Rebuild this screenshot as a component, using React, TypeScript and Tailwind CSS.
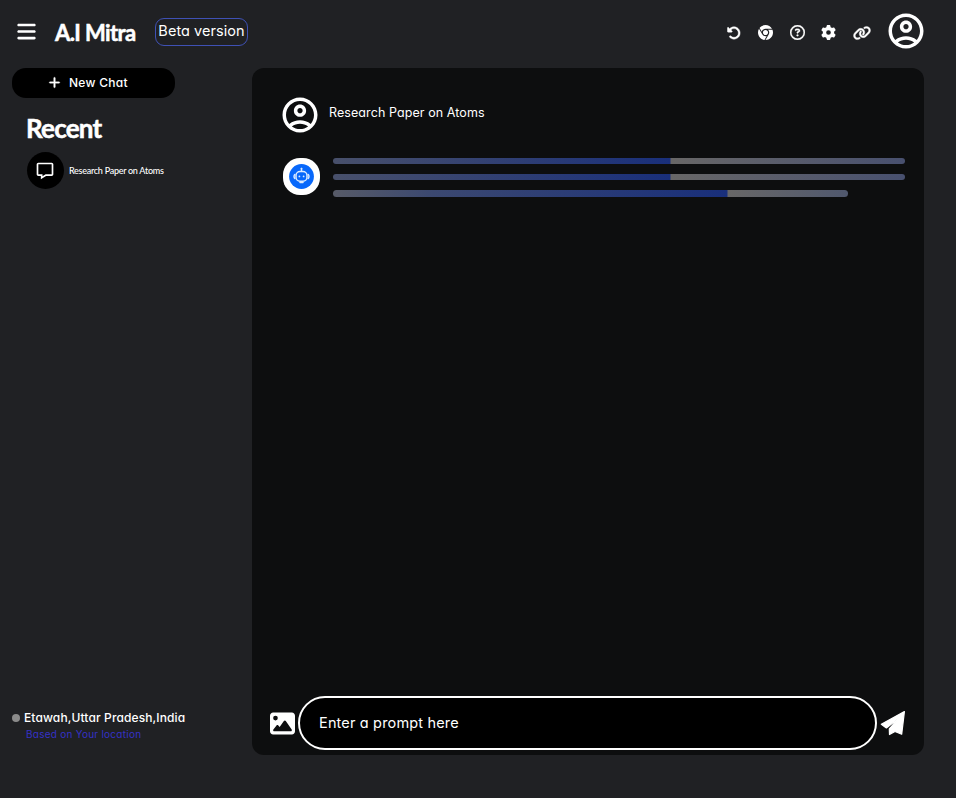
import React from "react";
import { FaBars, FaPlus, FaChrome, FaGear, FaLink, FaRotateLeft, FaRegCircleQuestion, FaImage } from "react-icons/fa6";
import { MdOutlineAccountCircle } from "react-icons/md";
import { BiMessage } from "react-icons/bi";

function BotLogo() {
  return (
    <svg viewBox="0 0 37 37" className="size-[37px]">
      <circle cx="18.5" cy="18.5" r="12.4" fill="#0868fb" />
      <g stroke="#dcebff" strokeWidth="1.5" fill="none">
        <rect x="13" y="13.6" width="11" height="9.6" rx="4" />
        <path d="M18.5 13V10.5M11.8 16.5c-1 .8-1 3.2 0 4M25.2 16.5c1 .8 1 3.2 0 4M17 24.6h3" strokeLinecap="round" />
      </g>
      <circle cx="18.5" cy="10.6" r="0.9" fill="#dcebff" />
      <circle cx="16.4" cy="18.4" r="0.9" fill="#dcebff" />
      <circle cx="20.6" cy="18.4" r="0.9" fill="#dcebff" />
    </svg>
  );
}

function SendIcon() {
  return (
    <svg viewBox="0 0 24 24" className="ml-1 size-6 overflow-visible" fill="white" stroke="white" strokeWidth="1.2" strokeLinejoin="round">
      <path d="M.3 13.2 23.4.6 20.7 23.2 14 20.5 8.5 23.5 8.3 18 17.4 7.6 5.4 17Z" />
    </svg>
  );
}

function Header() {
  return (
    <header className="flex h-[68px] shrink-0 items-start">
      <FaBars className="mt-[21px] ml-4 size-[21px]" />
      <h1 className="mt-[19px] ml-[18px] w-[80px] whitespace-nowrap font-[Lato,sans-serif] text-[22px] leading-[28px] font-bold tracking-[-0.6px] [-webkit-text-stroke:0.5px_white]">A.I Mitra</h1>
      <div className="mt-[18px] ml-5 flex h-7 w-[93px] items-center justify-center rounded-[9px] border border-[#3f51b5] pb-[3px] text-[14.5px] whitespace-nowrap tracking-[0.05px]">Beta version</div>
      <nav className="ml-auto flex h-[65px] items-center">
        <FaRotateLeft className="size-[14px]" stroke="white" strokeWidth="16" />
        <FaChrome className="ml-[17px] size-[15px]" />
        <FaRegCircleQuestion className="ml-[17px] size-[15px]" stroke="white" strokeWidth="10" />
        <FaGear className="ml-4 size-[15px]" />
        <FaLink className="ml-[17px] size-[18px]" stroke="white" strokeWidth="12" />
        <MdOutlineAccountCircle className="mr-[29px] mb-[3px] ml-[14px] size-[42px]" />
      </nav>
    </header>
  );
}

function Sidebar() {
  return (
    <aside className="flex w-[252px] shrink-0 flex-col pl-3">
      <button className="flex h-[30px] w-[163px] items-center rounded-[14px] bg-black pl-9 text-[12px] font-medium tracking-[0.28px]">
        <FaPlus className="mr-2 mb-px size-[13px]" stroke="white" strokeWidth="12" />New Chat
      </button>
      <h2 className="mt-4 ml-[14px] font-[Lato,sans-serif] text-[26px] leading-[29px] font-bold tracking-[-0.8px] [-webkit-text-stroke:0.5px_white]">Recent</h2>
      <div className="mt-[9px] ml-[15px] flex items-center">
        <div className="flex size-[37px] items-center justify-center rounded-full bg-black pr-px">
          <BiMessage className="size-5" />
        </div>
        <span className="ml-[5px] font-[Lato,sans-serif] text-[9px] font-medium tracking-[-0.27px] whitespace-nowrap">Research Paper on Atoms</span>
      </div>
      <div className="mt-auto pb-[13px]">
        <div className="flex h-[18px] items-center text-[12px] font-medium tracking-[0.12px] whitespace-nowrap">
          <span className="mr-1 size-[8px] rounded-full bg-[#8b8b8b]" />Etawah,Uttar Pradesh,India
        </div>
        <p className="ml-[14px] h-[15px] text-[10px] leading-[15px] tracking-[0.25px] whitespace-nowrap text-[#3531c7]">Based on Your location</p>
      </div>
    </aside>
  );
}

function Loader() {
  return (
    <div className="flex flex-col">
      <div className="h-[6px] w-[572px] rounded-full bg-[linear-gradient(to_right,#48506b_0,#192f7b_337px,#686767_338px,#48506f_100%)]" />
      <div className="mt-[10px] h-[6px] w-[572px] rounded-full bg-[linear-gradient(to_right,#48506b_0,#192f7b_337px,#686767_338px,#48506f_100%)]" />
      <div className="mt-[10px] h-[7px] w-[515px] rounded-full bg-[linear-gradient(to_right,#575b68_0,#3b4870_100px,#192f7b_394px,#686767_395px,#50586e_100%)]" />
    </div>
  );
}

export default function App() {
  return (
    <div className="flex h-[798px] w-[956px] flex-col overflow-hidden bg-[#202124] font-[Inter,sans-serif] text-white [font-feature-settings:'cv11']">
      <Header />
      <div className="flex h-[687px]">
        <Sidebar />
        <main className="flex w-[672px] flex-col rounded-[12px] bg-[#0d0e0f]">
          <div className="mt-[26px] ml-[27px] flex h-[42px] items-center">
            <MdOutlineAccountCircle className="size-[42px]" />
            <p className="mb-1 ml-2 text-[12.5px] tracking-[0.08px] whitespace-nowrap">Research Paper on Atoms</p>
          </div>
          <div className="mt-[22px] ml-[31px] flex items-start">
            <div className="mr-[13px] size-[37px] rounded-[17px] bg-white"><BotLogo /></div>
            <Loader />
          </div>
          <div className="mt-auto mb-[5px] flex h-[54px] items-center pl-[18px]">
            <FaImage className="size-[25px]" />
            <div className="ml-[3px] flex h-[54px] w-[579px] items-center rounded-full border-2 border-white bg-black pl-[19px] text-[14.5px] tracking-[0.16px] whitespace-nowrap">Enter a prompt here</div>
            <SendIcon />
          </div>
        </main>
      </div>
    </div>
  );
}
